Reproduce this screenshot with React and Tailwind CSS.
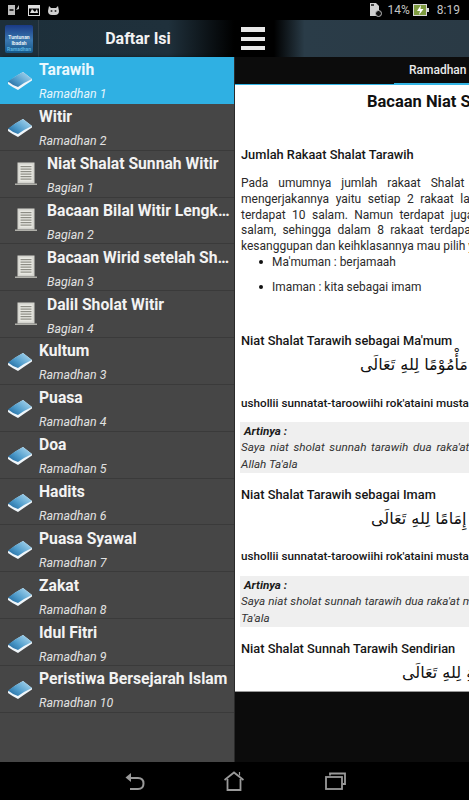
import React from "react";

const Book = () => (
  <svg width="26" height="20" viewBox="0 0 26 20" className="shrink-0 mt-[3px]">
    <defs>
      <linearGradient id="bk" x1="0" y1="1" x2="1" y2="0.2">
        <stop offset="0" stopColor="#1a6096" />
        <stop offset="0.45" stopColor="#4f9ccb" />
        <stop offset="1" stopColor="#a9d6ee" />
      </linearGradient>
    </defs>
    <path d="M1 11.5 Q8 5 16 1 L25 8 L25 9.5 Q18 14 11 19 Q5 16 1 13 Z" fill="#f0f6fa" />
    <path d="M1 10.5 Q8 5 16 1 L25 8 Q18 11 11 16 Q5 14 1 10.5 Z" fill="url(#bk)" />
  </svg>
);

const Doc = () => (
  <svg width="22" height="24" viewBox="0 0 22 24" className="shrink-0">
    <rect x="2.5" y="0.5" width="17" height="21" fill="#d4d4ce" />
    <rect x="4.5" y="2.5" width="13" height="17" fill="#e8e8e2" />
    {[4, 6.5, 9, 11.5, 14, 16.5].map((y) => (
      <rect key={y} x="5.5" y={y} width="11" height="1.2" fill="#8d8d85" />
    ))}
    <rect x="0" y="21.5" width="22" height="1.5" fill="#b0b0aa" />
  </svg>
);

const Row = ({ title, sub, doc, active }) => (
  <div
    className={`h-[46.85px] shrink-0 flex items-center border-b ${
      active ? "bg-[#2fb0e3] border-[#2fb0e3]" : "bg-[#464646] border-[#3a3a3a]"
    } ${doc ? "pl-[15px]" : "pl-[7px]"}`}
  >
    <div className="w-[32px]">{doc ? <Doc /> : <Book />}</div>
    <div className="min-w-0 flex-1 pr-[1px] pt-[4px]">
      <div className={`truncate font-bold text-[15.7px] leading-[20px] -mt-[1px] ${active ? "text-[#eaf8fe]" : "text-[#f2f2f2]"}`}>{title}</div>
      <div className={`italic text-[12.4px] leading-[16px] mt-[6px] ${active ? "text-[#e6f6fd]" : "text-[#e2e2e2]"}`}>{sub}</div>
    </div>
  </div>
);

const rows = [
  { title: "Tarawih", sub: "Ramadhan 1", active: true },
  { title: "Witir", sub: "Ramadhan 2" },
  { title: "Niat Shalat Sunnah Witir", sub: "Bagian 1", doc: true },
  { title: "Bacaan Bilal Witir Lengkap", sub: "Bagian 2", doc: true },
  { title: "Bacaan Wirid setelah Shalat", sub: "Bagian 3", doc: true },
  { title: "Dalil Sholat Witir", sub: "Bagian 4", doc: true },
  { title: "Kultum", sub: "Ramadhan 3" },
  { title: "Puasa", sub: "Ramadhan 4" },
  { title: "Doa", sub: "Ramadhan 5" },
  { title: "Hadits", sub: "Ramadhan 6" },
  { title: "Puasa Syawal", sub: "Ramadhan 7" },
  { title: "Zakat", sub: "Ramadhan 8" },
  { title: "Idul Fitri", sub: "Ramadhan 9" },
  { title: "Peristiwa Bersejarah Islam", sub: "Ramadhan 10" },
];

const paraLines = [
  ["Pada umumnya jumlah rakaat Shalat Tarawih", "7px"],
  ["mengerjakannya yaitu setiap 2 rakaat lalu salam", "3.6px"],
  ["terdapat 10 salam.  Namun terdapat juga", "3.4px"],
  ["salam, sehingga dalam 8 rakaat terdapat", "3.4px"],
  ["kesanggupan dan keihklasannya mau pilih yang", "-0.1px"],
];

const Arabic = ({ text, pl, className }) => (
  <div dir="ltr" className={`h-[24px] flex ${className}`} style={{ paddingLeft: pl }}>
    <span dir="rtl" className="whitespace-nowrap font-['DejaVu_Sans',sans-serif] text-[16px] leading-[24px] text-[#111]">{text}</span>
  </div>
);

const Heading = ({ children, className = "" }) => (
  <div className={`font-medium text-[12.8px] leading-[16px] text-[#161616] whitespace-nowrap ${className}`}>{children}</div>
);

const Latin = ({ className = "" }) => (
  <div className={`font-medium text-[11.7px] leading-[16px] text-[#161616] whitespace-nowrap ${className}`}>
    ushollii sunnatat-taroowiihi rok'ataini mustaqbilal qiblati
  </div>
);

const Note = ({ line, last, ws, className = "" }) => (
  <div className={`h-[51px] bg-[#efefef] -mx-[1px] pl-[1px] italic text-[11.7px] leading-[17px] text-[#333] whitespace-nowrap ${className}`}>
    <div className="font-bold text-[#1c1c1c] pl-[3px] pt-[1px] leading-[16px]">Artinya :</div>
    <div style={{ wordSpacing: ws }}>{line}</div>
    <div>{last}</div>
  </div>
);

export default function App() {
  return (
    <div className="w-[469px] h-[800px] overflow-hidden bg-black flex flex-col font-['Roboto',sans-serif]">
      {/* status bar */}
      <div className="h-[20px] shrink-0 bg-black flex items-center justify-between pl-[8px] pr-[5px] text-[#c4c4c4]">
        <div className="flex items-center gap-[8px]">
          <svg width="12" height="12" viewBox="0 0 12 12">
            <rect x="0" y="1" width="7" height="10" fill="#bdbdbd" />
            <rect x="1.5" y="5" width="4" height="2" fill="#333" />
            <path d="M8 6 L11 1 L11 5 Z" fill="#bdbdbd" />
          </svg>
          <svg width="12" height="11" viewBox="0 0 12 11">
            <rect x="0.5" y="0.5" width="11" height="10" fill="none" stroke="#e0e0e0" />
            <rect x="0.5" y="0.5" width="11" height="3" fill="#e0e0e0" />
            <path d="M2 8 L4 4 L7 7 L9 4 L10 8 Z" fill="#e0e0e0" />
          </svg>
          <svg width="13" height="11" viewBox="0 0 13 11" className="-ml-[1px]">
            <path d="M2 1 L4 3 H9 L11 1 L12 6 Q12 10 8 10 H5 Q1 10 1 6 Z" fill="#d0d0d0" />
            <circle cx="4.5" cy="6" r="1" fill="#333" />
            <circle cx="8.5" cy="6" r="1" fill="#333" />
          </svg>
        </div>
        <div className="flex items-center text-[12px]">
          <svg width="13" height="14" viewBox="0 0 13 14">
            <path d="M1 0 H7 L10 3 V13 H1 Z" fill="#d0d0d0" />
            <rect x="2" y="1" width="3" height="2" fill="#444" />
            <circle cx="9.5" cy="10.5" r="3" fill="#111" stroke="#bbb" strokeWidth="1" />
          </svg>
          <span className="ml-[6px]">14%</span>
          <svg width="16" height="12" viewBox="0 0 16 12" className="ml-[3px]">
            <rect x="0.5" y="0.5" width="13" height="11" fill="#7d9a3f" stroke="#d8d8d8" />
            <rect x="14" y="4" width="2" height="4" fill="#d8d8d8" />
            <path d="M8 1 L4 7 H7 L6 11 L10.5 5 H7.5 Z" fill="#fff" />
          </svg>
          <span className="ml-[8px] mr-[4px]">8:19</span>
        </div>
      </div>

      {/* action bar */}
      <div className="h-[37px] shrink-0 flex">
        <div className="w-[234px] shrink-0 flex bg-[linear-gradient(90deg,#1d2f3a_0%,#1f303b_72%,#000_100%)]">
          <div className="w-[39px] shrink-0 flex items-center justify-center border-r border-[#33414a]">
            <div className="w-[28px] h-[28px] rounded-[2px] bg-[linear-gradient(180deg,#1a3a86_0%,#3a78b0_55%,#14588a_100%)] flex flex-col items-center justify-end text-[#e4eef6] font-bold text-[5px] leading-[6px] pb-[1px] overflow-hidden whitespace-nowrap">
              <span>Tuntunan</span>
              <span>Ibadah</span>
              <span className="text-[#5cb4e0]">Ramadhan</span>
            </div>
          </div>
          <div className="flex-1 text-center text-[#f2f2f2] font-bold text-[16px] leading-[37px] pl-[3px]">Daftar Isi</div>
        </div>
        <div className="flex-1 flex items-center bg-[linear-gradient(90deg,#000_0%,#000_17%,#2a3c48_30%,#2a3a45_100%)]">
          <div className="ml-[7px] w-[24px] flex flex-col gap-[4.5px]">
            <div className="h-[5px] bg-[#e8e8e8]" />
            <div className="h-[4.5px] bg-[#e8e8e8]" />
            <div className="h-[4.5px] bg-[#e8e8e8]" />
          </div>
        </div>
      </div>

      {/* main */}
      <div className="flex-1 min-h-0 flex">
        {/* drawer */}
        <div className="w-[235px] shrink-0 flex flex-col bg-[#464646] border-r border-[#2a2a2a] shadow-[2px_0_3px_rgba(0,0,0,0.5)]">
          {rows.map((r) => (
            <Row key={r.title} {...r} />
          ))}
        </div>

        {/* content */}
        <div className="flex-1 min-w-0 flex flex-col bg-[#0c0c0c] overflow-hidden">
          <div className="h-[27px] shrink-0 flex flex-col">
            <div className="flex-1 pl-[174px] text-[#eaeaea] font-medium text-[12px] leading-[26px] whitespace-nowrap">Ramadhan 1</div>
            <div className="h-[3px] flex">
              <div className="w-[159px]" />
              <div className="flex-1 bg-[#33b5e5]" />
            </div>
          </div>
          <div className="h-[608px] shrink-0 bg-white border-t border-[#33b5e5] border-b border-b-[#999] pl-[6px] overflow-hidden w-[234px]">
            <div className="w-[460px]">
              <div className="font-bold text-[16.5px] leading-[20px] text-[#111] pl-[126px] pt-[7px] whitespace-nowrap">Bacaan Niat Shalat Tarawih</div>
              <Heading className="mt-[35px]">Jumlah Rakaat Shalat Tarawih</Heading>
              <div className="mt-[13px] text-[12px] leading-[15.75px] text-[#2a2a2a] whitespace-nowrap">
                {paraLines.map(([t, ws]) => (
                  <div key={t} style={{ wordSpacing: ws }}>{t}</div>
                ))}
              </div>
              <ul className="-mt-[1px] text-[11.9px] text-[#2a2a2a] leading-[16px] whitespace-nowrap">
                <li className="flex items-center h-[16px]">
                  <span className="ml-[18px] w-[4px] h-[4px] rounded-full bg-[#111] mr-[9px]" />Ma'muman : berjamaah
                </li>
                <li className="flex items-center h-[16px] mt-[9px]">
                  <span className="ml-[18px] w-[4px] h-[4px] rounded-full bg-[#111] mr-[9px]" />Imaman : kita sebagai imam
                </li>
              </ul>
              <Heading className="mt-[38px]">Niat Shalat Tarawih sebagai Ma'mum</Heading>
              <Arabic className="mt-[4px]" pl="119px" text="بْلَةِ مَأْمُوْمًا لِلهِ تَعَالَى" />
              <Latin className="mt-[18px]" />
              <Note className="mt-[11px]" ws="1.8px" line="Saya niat sholat sunnah tarawih dua raka'at menghadap" last="Allah Ta'ala" />
              <Heading className="mt-[14px]">Niat Shalat Tarawih sebagai Imam</Heading>
              <Arabic className="mt-[4px]" pl="130px" text="بْلَةِ إِمَامًا لِلهِ تَعَالَى" />
              <Latin className="mt-[17px]" />
              <Note className="mt-[12px]" ws="0.2px" line="Saya niat sholat sunnah tarawih dua raka'at menghadap" last="Ta'ala" />
              <Heading className="mt-[14px]">Niat Shalat Sunnah Tarawih Sendirian</Heading>
              <Arabic className="mt-[4px]" pl="161px" text="بْلَةِ لِلهِ تَعَالَى" />
            </div>
          </div>
        </div>
      </div>

      {/* nav bar */}
      <div className="h-[38px] shrink-0 bg-black flex items-center">
        <svg width="20" height="19" viewBox="0 0 20 19" fill="none" stroke="#9a9a9a" strokeWidth="2" className="ml-[125px]">
          <path d="M3 6 H13 Q18.5 6 18.5 11.5 Q18.5 17 13 17 H5" />
          <path d="M6 1 L6 10 L0.5 5.5 Z" fill="#9a9a9a" stroke="none" />
        </svg>
        <svg width="20" height="20" viewBox="0 0 20 20" fill="none" stroke="#9a9a9a" strokeWidth="1.8" className="ml-[79px]">
          <path d="M0.5 9 L10 1.5 L19.5 9" />
          <path d="M15.5 1 V4.5" strokeWidth="1.2" />
          <path d="M3.5 8 V19 H16.5 V8" />
        </svg>
        <svg width="21" height="18" viewBox="0 0 21 18" fill="none" stroke="#9a9a9a" strokeWidth="1.8" className="ml-[81px]">
          <path d="M5 3.5 V1.5 H20 V12 H17.5" />
          <rect x="1" y="5" width="16" height="12" />
        </svg>
      </div>
    </div>
  );
}
